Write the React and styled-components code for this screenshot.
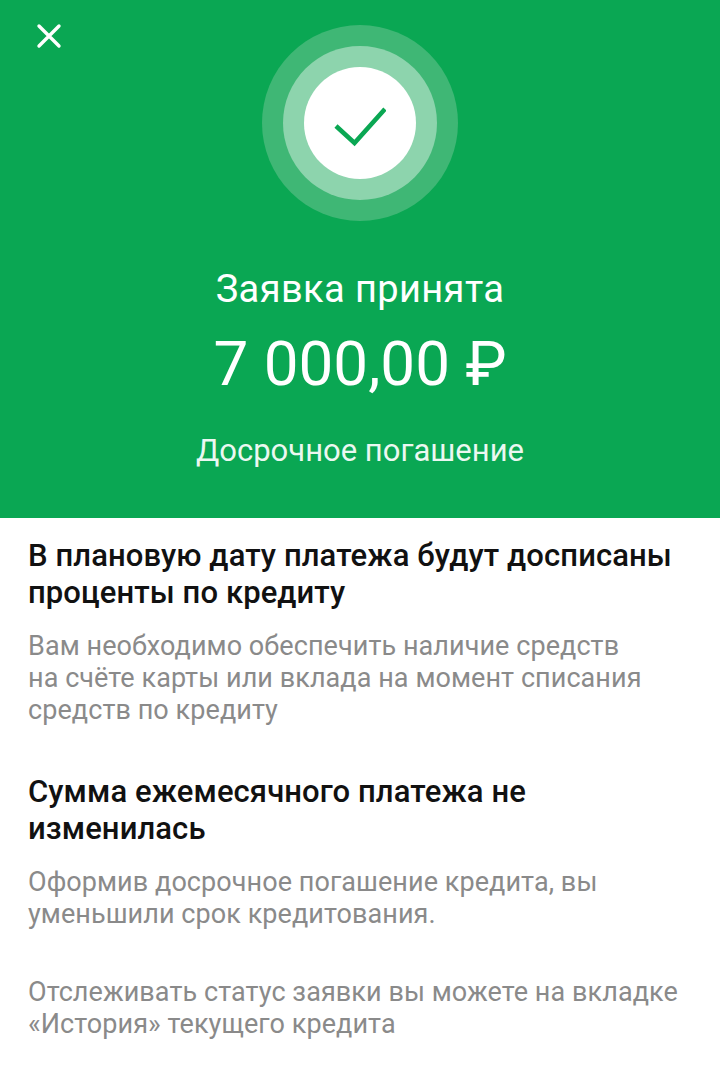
import React from 'react'
import styled, { createGlobalStyle } from 'styled-components'

const Global = createGlobalStyle`
  html, body { margin: 0; padding: 0; background: #fff; }
  body { font-family: Roboto, "Liberation Sans", sans-serif; }
`

const Page = styled.div`
  width: 720px;
  height: 1069px;
  overflow: hidden;
  background: #fff;
`

const Hero = styled.header`
  position: relative;
  height: 518px;
  background: #0aa753;
  display: flex;
  flex-direction: column;
  align-items: center;
  padding-top: 25px;
  box-sizing: border-box;
  color: #fff;
`

const Close = styled.button`
  position: absolute;
  left: 36px;
  top: 23px;
  width: 26px;
  height: 26px;
  padding: 0;
  border: 0;
  background: none;
  color: #fff;
`

const Ring = styled.div`
  width: ${p => p.$size}px;
  height: ${p => p.$size}px;
  border-radius: 50%;
  background: ${p => p.$bg};
  display: flex;
  align-items: center;
  justify-content: center;
`

const Title = styled.h1`
  margin: 46px 0 0;
  font-size: 38px;
  line-height: 44px;
  font-weight: 400;
  letter-spacing: 0.4px;
`

const Amount = styled.div`
  margin-top: 15px;
  font-size: 62px;
  line-height: 76px;
  font-weight: 400;
`

const Caption = styled.div`
  margin-top: 31px;
  font-size: 31px;
  line-height: 36px;
  opacity: 0.92;
`

const Body = styled.main`
  padding: 19px 28px 0;
`

const Heading = styled.h2`
  margin: ${p => p.$top || 0}px 0 0;
  font-size: 31px;
  line-height: 37px;
  font-weight: 500;
  letter-spacing: 0.1px;
  color: #111;
`

const Text = styled.p`
  margin: ${p => p.$top}px 0 0;
  font-size: 27px;
  line-height: 32px;
  color: #8a8a8a;
  letter-spacing: 0.07px;
`

export default function App() {
  return (
    <Page>
      <Global />
      <Hero>
        <Close aria-label="Закрыть">
          <svg width="26" height="26" viewBox="0 0 26 26" fill="none" stroke="currentColor" strokeWidth="3.4" strokeLinecap="round">
            <path d="M3 3 23 23M23 3 3 23" />
          </svg>
        </Close>
        <Ring $size={196} $bg="#3fb775">
          <Ring $size={154} $bg="#8dd4ad">
            <Ring $size={112} $bg="#fff">
              <svg width="52" height="52" viewBox="0 0 52 52" fill="none" stroke="#0aa753" strokeWidth="4.6">
                <path d="M2 29 20.5 46 51 12" />
              </svg>
            </Ring>
          </Ring>
        </Ring>
        <Title>Заявка принята</Title>
        <Amount>7 000,00 ₽</Amount>
        <Caption>Досрочное погашение</Caption>
      </Hero>
      <Body>
        <Heading>В плановую дату платежа будут досписаны проценты по кредиту</Heading>
        <Text $top={19}>Вам необходимо обеспечить наличие средств<br />на счёте карты или вклада на момент списания<br />средств по кредиту</Text>
        <Heading $top={47}>Сумма ежемесячного платежа не<br />изменилась</Heading>
        <Text $top={19}>Оформив досрочное погашение кредита, вы<br />уменьшили срок кредитования.</Text>
        <Text $top={46}>Отслеживать статус заявки вы можете на вкладке<br />«История» текущего кредита</Text>
      </Body>
    </Page>
  )
}
